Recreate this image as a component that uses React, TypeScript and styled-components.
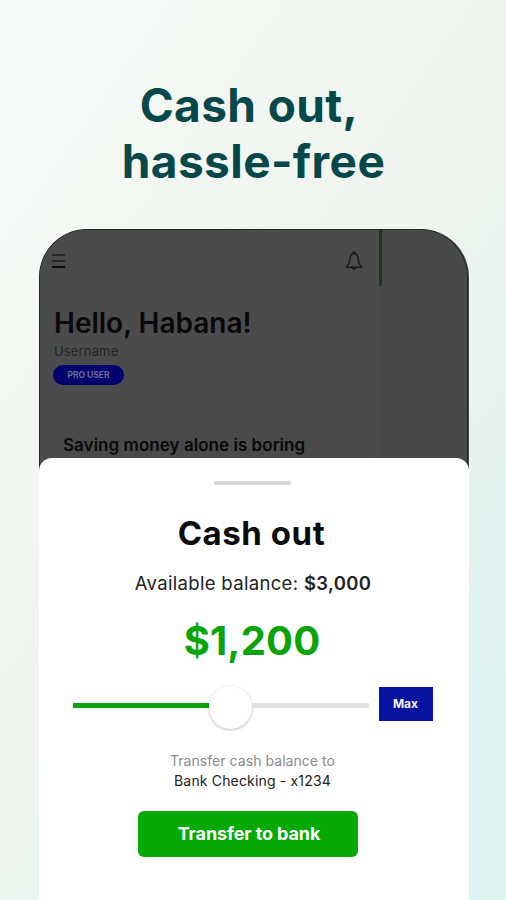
import React from "react";
import styled, { createGlobalStyle } from "styled-components";

const GlobalStyle = createGlobalStyle`
  *, *::before, *::after { box-sizing: border-box; }
  body { margin: 0; font-family: Inter, "Liberation Sans", sans-serif; }
  h1, h2, h3, p { margin: 0; }
  button { border: 0; padding: 0; font: inherit; }
`;

const Page = styled.main`
  width: 506px;
  height: 900px;
  overflow: hidden;
  display: flex;
  flex-direction: column;
  align-items: flex-start;
  padding: 77px 0 0 39px;
  background: linear-gradient(125deg, #f6fcf9 0%, #f2f7f2 25%, #eff4ee 50%, #e6f4f0 68%, #dff3f2 85%, #def2f1 100%);
`;

const Text = styled.p<{ $size: number; $line: number; $weight?: number; $color?: string; $spacing?: number }>`
  font-size: ${(p) => p.$size}px;
  line-height: ${(p) => p.$line}px;
  font-weight: ${(p) => p.$weight ?? 400};
  color: ${(p) => p.$color ?? "#0b0b0b"};
  letter-spacing: ${(p) => p.$spacing ?? 0}px;
  white-space: nowrap;
`;

const Headline = styled(Text)`
  width: 429px;
  height: 152px;
  text-align: center;
`;

const HeadlineLead = styled.span`
  display: block;
  margin-right: 9px;
`;

const Phone = styled.section`
  width: 430px;
  height: 671px;
  display: flex;
  flex-direction: column;
  border-radius: 48px 48px 0 0;
  overflow: hidden;
  background: linear-gradient(#474a49 0 240px, #fff 240px);
`;

const Home = styled.div`
  height: 242px;
  flex: none;
  display: grid;
  grid-template-columns: 339px 3px 1fr;
  width: 429px;
  border: 1px solid #242625;
  border-bottom: 0;
  border-radius: 48px 48px 0 0;
  margin-bottom: -13px;
`;

const HomeMain = styled.div`
  background: #4b4b4b;
  border-radius: 47px 0 0 0;
  padding-left: 14px;
  display: flex;
  flex-direction: column;
  align-items: flex-start;
`;

const HomeEdge = styled.div`
  height: 56px;
  background: #20381c;
`;

const TopBar = styled.header`
  width: 100%;
  height: 76px;
  padding: 20px 15px 0 0;
  display: flex;
  justify-content: space-between;
`;

const MenuIcon = styled.svg`
  width: 13px;
  height: 20px;
  margin-left: -2px;
`;

const BellIcon = styled.svg`
  width: 20px;
  height: 22px;
`;

const ProBadge = styled.div`
  width: 71px;
  height: 20px;
  margin: 3px 0 0 -1px;
  border-radius: 10px;
  background: #02026f;
  display: flex;
  align-items: center;
  justify-content: center;
`;

const PromoCard = styled.div`
  width: 316px;
  flex: 1;
  margin: 31px 0 0 -4px;
  padding: 18px 0 0 13px;
  background: #4a4a4a;
`;

const Sheet = styled.section`
  flex: 1;
  position: relative;
  background: #fff;
  border-radius: 13px 13px 0 0;
  display: flex;
  flex-direction: column;
  align-items: center;
  padding-top: 23px;
`;

const Handle = styled.div`
  width: 77px;
  height: 4px;
  margin-left: -3px;
  background: #d7d7d7;
  border-radius: 1px;
`;

const SheetLine = styled(Text)<{ $top: number; $shift?: number }>`
  margin-top: ${(p) => p.$top}px;
  margin-left: ${(p) => (p.$shift ?? 0) * 2}px;
`;

const Strong = styled.b`
  font-weight: 600;
`;

const AmountRow = styled.div`
  width: 360px;
  height: 44px;
  margin: 20px 0 0 -3px;
  display: flex;
  align-items: center;
`;

const Slider = styled.div`
  width: 296px;
  margin: -3px 10px 0 0;
  display: flex;
  align-items: center;
`;

const Track = styled.div<{ $width: number; $color: string }>`
  width: ${(p) => p.$width}px;
  height: 5px;
  margin-top: -1px;
  background: ${(p) => p.$color};
`;

const Knob = styled.div`
  width: 43px;
  height: 43px;
  flex: none;
  margin-top: 3px;
  border-radius: 50%;
  background: #fff;
  box-shadow: 0 1px 3px rgba(0, 0, 0, 0.27);
`;

const MaxButton = styled.button`
  width: 54px;
  height: 34px;
  margin-top: -6px;
  background: #0612a0;
`;

const TransferButton = styled.button`
  width: 220px;
  height: 46px;
  margin: 20px 0 0 -12px;
  padding-left: 2px;
  border-radius: 6px;
  background: #04a904;
`;

export default function App() {
  return (
    <>
      <GlobalStyle />
      <Page>
        <Headline as="h1" $size={46} $line={56} $weight={700} $color="#064849" $spacing={0.4}>
          <HeadlineLead>Cash out,</HeadlineLead>
          hassle-free
        </Headline>
        <Phone>
          <Home>
            <HomeMain>
              <TopBar>
                <MenuIcon viewBox="0 0 13 20" fill="none" strokeWidth="1.9">
                  <path d="M0 5H13M0 11H13" stroke="#202a29" />
                  <path d="M0 17H13" stroke="#050505" />
                </MenuIcon>
                <BellIcon viewBox="0 0 20 22" fill="none" stroke="#191b1b" strokeWidth="1.5" strokeLinejoin="round">
                  <path d="M10 3.4C7.2 3.4 6.2 5.2 6 8.2C5.8 12.3 4.8 14.4 2.3 17.2H17.7C15.2 14.4 14.2 12.3 14 8.2C13.8 5.2 12.8 3.4 10 3.4Z" />
                  <path d="M8.9 2.9C8.9 1.6 11.1 1.6 11.1 2.9M8.2 17.4C8.4 19.6 11.6 19.6 11.8 17.4" />
                </BellIcon>
              </TopBar>
              <Text as="h2" $size={28} $line={34} $weight={600} $color="#080808">Hello, Habana!</Text>
              <Text $size={13} $line={22} $color="#242424" $spacing={0.15}>Username</Text>
              <ProBadge>
                <Text $size={8.5} $line={20} $weight={700} $color="#686b94">PRO USER</Text>
              </ProBadge>
              <PromoCard>
                <Text as="h3" $size={17} $line={22} $weight={600} $color="#080808" $spacing={0.04}>Saving money alone is boring</Text>
              </PromoCard>
            </HomeMain>
            <HomeEdge />
          </Home>
          <Sheet>
            <Handle />
            <SheetLine as="h2" $top={28} $shift={-2.5} $size={33} $line={40} $weight={700} $spacing={0.55}>Cash out</SheetLine>
            <SheetLine $top={18} $shift={-1} $size={18.5} $line={24} $color="#222" $spacing={0.33}>
              Available balance: <Strong>$3,000</Strong>
            </SheetLine>
            <SheetLine $top={22} $shift={-2} $size={40} $line={48} $weight={700} $color="#08a408" $spacing={0.1}>$1,200</SheetLine>
            <AmountRow>
              <Slider>
                <Track $width={136} $color="#08a408" />
                <Knob />
                <Track $width={117} $color="#e1e1e1" />
              </Slider>
              <MaxButton>
                <Text as="span" $size={12} $line={34} $weight={700} $color="#f4f4ff">Max</Text>
              </MaxButton>
            </AmountRow>
            <SheetLine $top={22} $shift={-1.5} $size={14} $line={20} $color="#8b8b8b" $spacing={0.05}>Transfer cash balance to</SheetLine>
            <SheetLine $top={0} $shift={-1.5} $size={14} $line={20} $color="#222" $spacing={0.17}>Bank Checking - x1234</SheetLine>
            <TransferButton>
              <Text as="span" $size={18} $line={46} $weight={700} $color="#fff" $spacing={-0.1}>Transfer to bank</Text>
            </TransferButton>
          </Sheet>
        </Phone>
      </Page>
    </>
  );
}
